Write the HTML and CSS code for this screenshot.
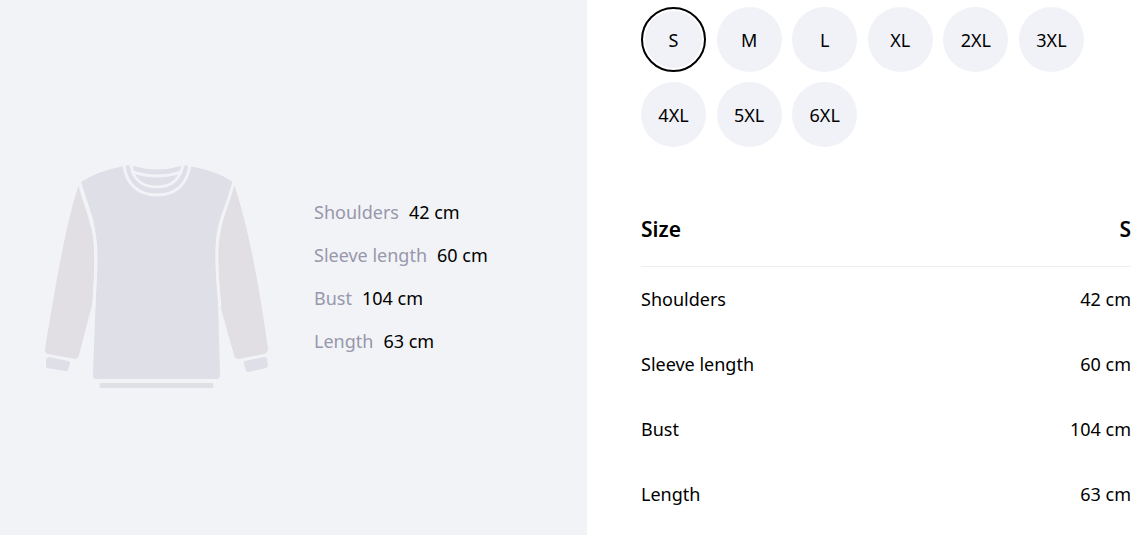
FILE: index.html
```html
<!DOCTYPE html>
<html lang="en">
<head>
    <meta charset="UTF-8">
    <meta name="viewport" content="width=device-width, initial-scale=1.0">
    <title>Size guide</title>
    <link rel="stylesheet" href="styles.css">
</head>
<body>
    <main class="size-guide">
        <section class="preview">
            <svg class="garment" viewBox="0 0 224 224" aria-hidden="true">
                <!-- sleeves and cuffs -->
                <g class="sleeve">
                    <path d="M34 19C22 55 13 105 0 184Q-1 188 3 189L30 194Q33 194 34 190L47 140Q50 110 49 86Q49 70 44 55Z"/>
                    <path d="M189 19C201 55 212 105 223 184Q223 188 219 189L194 194Q190 194 189 190L175 140Q173 110 173 86Q174 70 179 52Z"/>
                </g>
                <path class="body" d="M4 192L23 196Q26 197 25 199L23 205Q22 207 20 206L2 203Q1 202 1 201L1 195Q2 192 4 192Z"/>
                <path class="body" d="M219 192L200 196Q198 197 199 199L201 206Q202 207 204 207L221 203Q223 202 223 200L222 194Q222 192 219 192Z"/>
                <!-- body -->
                <path class="body" d="M36 17Q53 6 79 1C86 0 84 1 88 1Q112 8 136 1C140 1 138 0 144 1Q172 6 188 17L178 48Q171 72 172 100L175 210Q175 214 171 214L51 214Q48 214 48 210L52 100Q52 72 48 54Q43 38 36 17Z"/>
                <path class="hem" d="M56 218H167Q169 218 168 223H55Q54 218 56 218Z"/>
                <!-- armhole seams -->
                <path class="seam" d="M34 17Q38 34 45 51C51 70 51 84 51 100L49 142"/>
                <path class="seam" d="M189 17Q184 34 177 53C171 70 171 90 173 120L175 142"/>
                <!-- collar seams -->
                <path class="seam" d="M79 0C81 19 93 30 112 30S142 19 145 0"/>
                <path class="seam" d="M86 0C88 15 98 22 112 22S135 15 138 0"/>
                <path class="seam" d="M88 7Q112 15 136 7"/>
                <path class="neck" d="M87 0Q112 8 137 0Z"/>
            </svg>
            <dl class="measures">
                <div class="measure">
                    <dt>Shoulders</dt>
                    <dd>42 cm</dd>
                </div>
                <div class="measure">
                    <dt>Sleeve length</dt>
                    <dd>60 cm</dd>
                </div>
                <div class="measure">
                    <dt>Bust</dt>
                    <dd>104 cm</dd>
                </div>
                <div class="measure">
                    <dt>Length</dt>
                    <dd>63 cm</dd>
                </div>
            </dl>
        </section>
        <section class="details">
            <div class="sizes">
                <button type="button" class="size active" aria-pressed="true">S</button>
                <button type="button" class="size">M</button>
                <button type="button" class="size">L</button>
                <button type="button" class="size">XL</button>
                <button type="button" class="size">2XL</button>
                <button type="button" class="size">3XL</button>
                <button type="button" class="size">4XL</button>
                <button type="button" class="size">5XL</button>
                <button type="button" class="size">6XL</button>
            </div>
            <table class="size-table">
                <thead>
                    <tr>
                        <th scope="col">Size</th>
                        <th scope="col">S</th>
                    </tr>
                </thead>
                <tbody>
                    <tr>
                        <td>Shoulders</td>
                        <td>42 cm</td>
                    </tr>
                    <tr>
                        <td>Sleeve length</td>
                        <td>60 cm</td>
                    </tr>
                    <tr>
                        <td>Bust</td>
                        <td>104 cm</td>
                    </tr>
                    <tr>
                        <td>Length</td>
                        <td>63 cm</td>
                    </tr>
                </tbody>
            </table>
        </section>
    </main>
</body>
</html>
```

FILE: styles.css
```css
* {
    box-sizing: border-box;
}
body {
    margin: 0;
    font-family: "Segoe UI", "Noto Sans", sans-serif;
    font-size: 18px;
    color: #000;
    background: #fff;
}
.size-guide {
    display: grid;
    grid-template-columns: 587fr 557fr;
    min-height: 100vh;
}

/* Left panel */
.preview {
    display: flex;
    align-items: center;
    gap: 45px;
    padding: 18px 45px 0;
    background: #f1f3f7;
}
.garment {
    width: 224px;
    flex-shrink: 0;
}
.garment .body {
    fill: #dedfe7;
}
.garment .sleeve {
    fill: #e1dfe4;
}
.garment .hem {
    fill: #dfdfe5;
}
.garment .neck {
    fill: #f1f3f7;
}
.garment .seam {
    fill: none;
    stroke: #f1f3f7;
    stroke-width: 3;
}
.measures {
    margin: 0;
}
.measure {
    display: flex;
    gap: 10px;
    line-height: 43px;
}
.measure dt {
    color: #9897ab;
}
.measure dd {
    margin: 0;
}

/* Right panel */
.details {
    padding: 7px 13px 0 54px;
}
.sizes {
    display: grid;
    grid-template-columns: repeat(6, 65px);
    justify-content: space-between;
    row-gap: 10px;
    max-width: 443px;
    margin-bottom: 46px;
}
.size {
    height: 65px;
    padding: 0;
    border: none;
    border-radius: 50%;
    background: #f1f2f7;
    color: inherit;
    font: inherit;
    cursor: pointer;
}
.size.active {
    border: 2px solid #000;
    box-shadow: inset 0 0 0 2px #fff;
}
.size-table {
    width: 100%;
    border-collapse: collapse;
}
.size-table th {
    height: 73px;
    padding: 0;
    border-bottom: 1px solid #eeeef0;
    font-size: 21px;
    font-weight: 600;
    text-align: left;
}
.size-table td {
    height: 65px;
    padding: 0;
}
.size-table th:last-child,
.size-table td:last-child {
    text-align: right;
}
```
